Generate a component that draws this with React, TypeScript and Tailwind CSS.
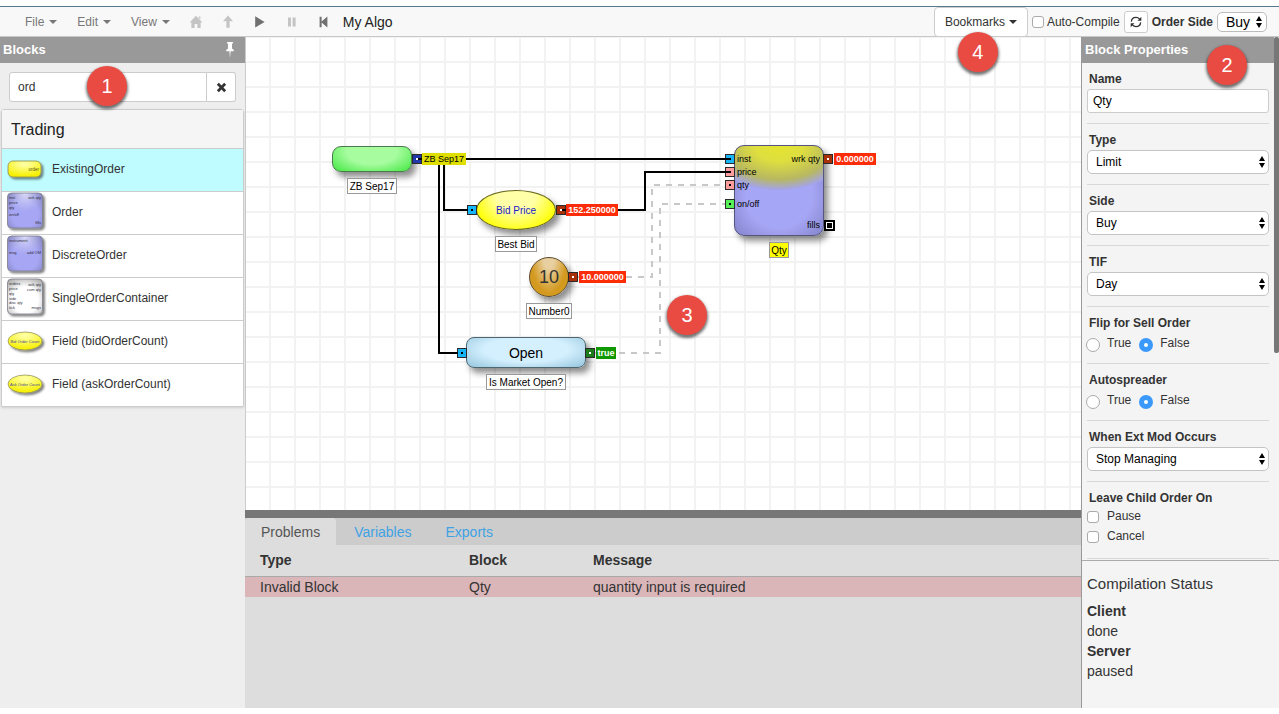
import React, { useState } from "react";

type IconProps = { className?: string };

const Caret = () => (
  <span className="border-x-4 border-t-4 border-x-transparent border-t-current" aria-hidden="true" />
);

const HomeIcon = ({ className }: IconProps) => (
  <svg viewBox="0 0 14 14" className={className} fill="currentColor" aria-hidden="true">
    <path d="M7 .8 13.4 7.4H11.6V13H8.4V9H5.6V13H2.4V7.4H.6Z" />
    <path d="M9.8 1.6h1.6v3L9.8 3z" />
  </svg>
);
const UpIcon = ({ className }: IconProps) => (
  <svg viewBox="0 0 14 14" className={className} fill="currentColor" aria-hidden="true">
    <path d="M7 .6 12 6.2H8.6V12.8H5.4V6.2H2Z" />
  </svg>
);
const PlayIcon = ({ className }: IconProps) => (
  <svg viewBox="0 0 14 14" className={className} fill="currentColor" aria-hidden="true">
    <path d="M2.2 1.2 11.600 7l-9.4 5.4z" />
  </svg>
);
const PauseIcon = ({ className }: IconProps) => (
  <svg viewBox="0 0 14 14" className={className} fill="currentColor" aria-hidden="true">
    <path d="M3 2.400h3v9H3zM7.600 2.400h3v9h-3z" />
  </svg>
);
const StepBackIcon = ({ className }: IconProps) => (
  <svg viewBox="0 0 14 14" className={className} fill="currentColor" aria-hidden="true">
    <path d="M2.6 1.800h2v4.600L10.400 1.600v10.800L4.600 7.600V12.200h-2z" />
  </svg>
);
const PinIcon = ({ className }: IconProps) => (
  <svg viewBox="0 0 10 18" className={className} fill="currentColor" aria-hidden="true">
    <path d="M2 1h6v1.500H7v5L8.800 9v1.200H5.600L5 17l-.6-6.800H1.200V9L3 7.500v-5H2z" />
  </svg>
);
const RemoveIcon = ({ className }: IconProps) => (
  <svg viewBox="0 0 12 12" className={className} stroke="currentColor" strokeWidth="3" aria-hidden="true">
    <path d="M2 2l8 8M10 2l-8 8" />
  </svg>
);
const RefreshIcon = ({ className }: IconProps) => (
  <svg viewBox="0 0 14 14" className={className} fill="none" stroke="currentColor" strokeWidth="1.5" aria-hidden="true">
    <path d="M1.6 6.600C1.800 3.600 4 1.700 7 1.700c1.700 0 3.200.8 4.200 2M12.400 7.400C12.200 10.400 10 12.300 7 12.300c-1.700 0-3.200-.8-4.200-2" />
    <path d="M13.200 1v4.400H8.800zM.8 13V8.600h4.400z" fill="currentColor" stroke="none" />
  </svg>
);
const UpDown = ({ className }: IconProps) => (
  <svg viewBox="0 0 8 12" className={className} fill="#000" aria-hidden="true">
    <path d="M4 0 7 5H1zM4 12 1 7h6z" />
  </svg>
);

const Badge = ({ n, className }: { n: number; className: string }) => (
  <span
    className={`absolute z-20 flex size-10 items-center justify-center rounded-full bg-[#e94b43] text-xl text-white shadow-[0_2px_3px_1px_rgba(0,0,0,0.55)] ${className}`}
  >
    {n}
  </span>
);

const iconButtons = [
  { label: "Home", Icon: HomeIcon, color: "text-[#c4c4c4]" },
  { label: "Up", Icon: UpIcon, color: "text-[#c4c4c4]" },
  { label: "Run", Icon: PlayIcon, color: "text-[#707070]" },
  { label: "Pause", Icon: PauseIcon, color: "text-[#c4c4c4]" },
  { label: "Restart", Icon: StepBackIcon, color: "text-[#707070]" },
];

function Toolbar() {
  return (
    <header className="flex h-[31px] shrink-0 items-center border-t border-b border-t-[#567a8c] border-b-[#c8c8c8] bg-[#f8f8f8] pr-3 pl-[25px] text-xs">
      <nav className="flex gap-5 text-[#777]">
        {["File", "Edit", "View"].map((m) => (
          <button key={m} type="button" className="flex items-center gap-[5px]">
            {m}
            <Caret />
          </button>
        ))}
      </nav>
      <div className="ml-[19px] flex gap-[18px]">
        {iconButtons.map(({ label, Icon, color }) => (
          <button key={label} type="button" aria-label={label} className={color}>
            <Icon className="size-3.5" />
          </button>
        ))}
      </div>
      <h1 className="ml-3 text-sm text-[#222]">My Algo</h1>
      <div className="ml-auto flex items-center gap-1 text-[#333]">
        <div className="relative">
          <button
            type="button"
            className="flex h-[30px] items-center gap-1 rounded-sm border border-[#ccc] bg-white px-[10px]"
          >
            Bookmarks
            <Caret />
          </button>
          <Badge n={4} className="top-[25px] left-6" />
        </div>
        <label className="flex items-center gap-[3px]">
          <input
            type="checkbox"
            className="size-3 appearance-none rounded-[3px] border border-[#aaa] bg-white checked:bg-[#3b99fc]"
          />
          Auto-Compile
        </label>
        <button
          type="button"
          aria-label="Compile"
          className="flex h-[22px] w-6 items-center justify-center rounded-[3px] border border-[#ccc] bg-white"
        >
          <RefreshIcon className="size-3" />
        </button>
        <label htmlFor="order-side" className="font-bold">
          Order Side
        </label>
        <div className="relative">
          <select
            id="order-side"
            className="block h-5 w-[50px] appearance-none rounded-[5px] border border-[#bbb] bg-white pl-2 text-sm leading-4 text-black"
          >
            <option>Buy</option>
            <option>Sell</option>
          </select>
          <UpDown className="pointer-events-none absolute top-1 right-1 h-3 w-2" />
        </div>
      </div>
    </header>
  );
}

type ThumbKind = "existing" | "order" | "discrete" | "container" | "bid" | "ask";

const thumbText: Record<"order" | "discrete" | "container", [number, number, "start" | "end", string][]> = {
  order: [
    [2, 7, "start", "inst"],
    [34, 7, "end", "wrk qty"],
    [2, 12, "start", "price"],
    [2, 17, "start", "qty"],
    [2, 24, "start", "on/off"],
    [34, 32, "end", "fills"],
  ],
  discrete: [
    [2, 7, "start", "instrument"],
    [2, 19, "start", "msg"],
    [34, 19, "end", "add OM"],
  ],
  container: [
    [2, 7, "start", "orders"],
    [34, 8, "end", "wrk qty"],
    [2, 12, "start", "price"],
    [34, 13, "end", "cum qty"],
    [2, 17, "start", "qty"],
    [2, 22, "start", "side"],
    [2, 26, "start", "disc qty"],
    [2, 31, "start", "tick"],
    [34, 31, "end", "msgs"],
  ],
};

function Thumb({ kind }: { kind: ThumbKind }) {
  const id = `thumb-${kind}`;
  const oval = kind === "bid" || kind === "ask";
  const yellow = oval || kind === "existing";
  const blue = kind === "order" || kind === "discrete";
  const inner = yellow ? "#ffff9e" : blue ? "#a6a6f4" : "#ffffff";
  const outer = yellow ? "#f6f000" : blue ? "#7e7eba" : "#a4a4a4";
  return (
    <svg viewBox="0 0 40 40" className="size-10 shrink-0" aria-hidden="true">
      <defs>
        <radialGradient id={id} cx="0.5" cy={yellow ? "0.2" : "0.6"} r="0.75">
          <stop offset={yellow ? "0.1" : "0.5"} stopColor={inner} />
          <stop offset="1" stopColor={outer} />
        </radialGradient>
        <radialGradient id={`${id}-g`} cx="0.5" cy="0" r="0.55">
          <stop offset="0" stopColor="#e4e4fa" stopOpacity="0.9" />
          <stop offset="1" stopColor="#c8c8f0" stopOpacity="0" />
        </radialGradient>
        <filter id={`${id}-s`} x="-20%" y="-20%" width="150%" height="150%">
          <feDropShadow dx="2" dy="2" stdDeviation="1.2" floodOpacity="0.5" />
        </filter>
      </defs>
      {oval ? (
        <g>
          <ellipse cx="18" cy="20" rx="17" ry="9" fill={`url(#${id})`} stroke="#8a8a50" strokeWidth="0.7" filter={`url(#${id}-s)`} />
          <text x="18" y="21.500" textAnchor="middle" fontSize="4" fill="#4a4a98">
            {kind === "bid" ? "Bid Order Count" : "Ask Order Count"}
          </text>
        </g>
      ) : kind === "existing" ? (
        <g>
          <rect x="1" y="12" width="33" height="16" rx="5" fill={`url(#${id})`} stroke="#8a8a50" strokeWidth="0.8" filter={`url(#${id}-s)`} />
          <text x="32" y="21.500" textAnchor="end" fontSize="4.500" fill="#55550a">
            order
          </text>
        </g>
      ) : (
        <g>
          <rect x="0.5" y="1" width="35" height="35" rx="4" fill={`url(#${id})`} stroke="#7c7c88" strokeWidth="0.8" filter={`url(#${id}-s)`} />
          {blue && <rect x="1" y="1.500" width="34" height="34" rx="4" fill={`url(#${id}-g)`} />}
          {thumbText[kind as "order" | "discrete" | "container"].map(([x, y, anchor, t]) => (
            <text key={t} x={x} y={y} textAnchor={anchor} fontSize="4" fill="#30303c">
              {t}
            </text>
          ))}
        </g>
      )}
    </svg>
  );
}

const blocks: { kind: ThumbKind; name: string }[] = [
  { kind: "existing", name: "ExistingOrder" },
  { kind: "order", name: "Order" },
  { kind: "discrete", name: "DiscreteOrder" },
  { kind: "container", name: "SingleOrderContainer" },
  { kind: "bid", name: "Field (bidOrderCount)" },
  { kind: "ask", name: "Field (askOrderCount)" },
];

function BlocksPanel() {
  const [query, setQuery] = useState("ord");
  const [selected, setSelected] = useState("ExistingOrder");
  return (
    <aside className="flex w-[246px] shrink-0 flex-col border-r border-[#ccc] bg-[#eee]">
      <div className="flex h-[26px] shrink-0 items-center justify-between bg-[#999] pr-[10px] pl-[3px] text-white">
        <h2 className="text-[13px] font-bold">Blocks</h2>
        <button type="button" aria-label="Pin panel">
          <PinIcon className="h-[18px] w-[10px]" />
        </button>
      </div>
      <div className="relative mx-[9px] mt-[9px] flex h-[30px]">
        <input
          type="text"
          aria-label="Search blocks"
          value={query}
          onChange={(e) => setQuery(e.target.value)}
          className="min-w-0 flex-1 rounded-l-[3px] border border-[#ccc] bg-white px-2 text-xs text-[#333]"
        />
        <button
          type="button"
          aria-label="Clear search"
          onClick={() => setQuery("")}
          className="flex w-[29px] items-center justify-center rounded-r-[3px] border border-l-0 border-[#ccc] bg-white text-[#333]"
        >
          <RemoveIcon className="size-[11px]" />
        </button>
        <Badge n={1} className="top-[-6px] left-[78px]" />
      </div>
      <section className="mx-px mt-[7px] rounded-t-[3px] border border-[#ccc] shadow-sm">
        <h3 className="flex h-[38px] items-center bg-[#f5f5f5] pt-px pl-[9px] text-base text-[#222]">Trading</h3>
        <ul>
          {blocks.map((b) => (
            <li key={b.name} className="border-t border-[#ccc]">
              <button
                type="button"
                onClick={() => setSelected(b.name)}
                className={`flex h-[42px] w-full items-center gap-[5px] pb-[2px] pl-[5px] text-left text-xs text-[#333] ${
                  selected === b.name ? "bg-[#bffcff]" : "bg-white"
                }`}
              >
                <Thumb kind={b.kind} />
                {b.name}
              </button>
            </li>
          ))}
        </ul>
      </section>
    </aside>
  );
}

const ports = [
  { pos: "left-[166px] top-[117px]", fill: "bg-[#2338a8]", dot: "bg-white" },
  { pos: "left-[221px] top-[168px]", fill: "bg-[#18b4f8]", dot: "bg-black" },
  { pos: "left-[310px] top-[168px]", fill: "bg-[#a83008]", dot: "bg-white" },
  { pos: "left-[322px] top-[235px]", fill: "bg-[#a83008]", dot: "bg-white" },
  { pos: "left-[211px] top-[311px]", fill: "bg-[#18b4f8]", dot: "bg-black" },
  { pos: "left-[339px] top-[311px]", fill: "bg-[#1c7c1c]", dot: "bg-white" },
  { pos: "left-[479px] top-[117px]", fill: "bg-[#18b4f8]", dot: "bg-black" },
  { pos: "left-[479px] top-[130px]", fill: "bg-[#ff9c9c]", dot: "bg-black" },
  { pos: "left-[479px] top-[143px]", fill: "bg-[#ff9c9c]", dot: "bg-black" },
  { pos: "left-[479px] top-[162px]", fill: "bg-[#58f058]", dot: "bg-black" },
  { pos: "left-[577px] top-[117px]", fill: "bg-[#a83008]", dot: "bg-white" },
];

const captions = [
  { text: "ZB Sep17", pos: "left-[101px] top-[141px] w-[50px]", look: "border-[#999] bg-white" },
  { text: "Best Bid", pos: "left-[249px] top-[199px] w-[42px]", look: "border-[#999] bg-white" },
  { text: "Number0", pos: "left-[280px] top-[266px] w-[46px]", look: "border-[#999] bg-white" },
  { text: "Is Market Open?", pos: "left-[240px] top-[337px] w-[80px]", look: "border-[#999] bg-white" },
  { text: "Qty", pos: "left-[523px] top-[205px] w-[20px]", look: "border-[#999] bg-[#ff0]" },
];

const values = [
  { text: "ZB Sep17", pos: "left-[176px] top-[116px] w-[44px]", look: "bg-[#dede00] text-black" },
  { text: "152.250000", pos: "left-[320px] top-[167px] w-[52px]", look: "bg-[#fc2c08] font-bold text-white" },
  { text: "10.000000", pos: "left-[333px] top-[234px] w-[47px]", look: "bg-[#fc2c08] font-bold text-white" },
  { text: "true", pos: "left-[350px] top-[310px] w-[20px]", look: "bg-[#109800] font-bold text-white" },
  { text: "0.000000", pos: "left-[588px] top-[116px] w-[42px]", look: "bg-[#fc2c08] font-bold text-white" },
];

const nodeShadow = "shadow-[4px_5px_6px_rgba(0,0,0,0.45)]";

function Canvas() {
  return (
    <main className="relative min-h-0 flex-1 overflow-hidden bg-white bg-[linear-gradient(to_right,transparent_23px,#f2f2f2_23px),linear-gradient(to_bottom,transparent_23px,#f2f2f2_23px)] bg-[size:25px_25px] bg-[position:0_1px]">
      <div className={`absolute top-[109px] left-[86px] h-[26px] w-[80px] rounded-[9px] border border-[#4b7a4b] bg-[radial-gradient(ellipse_at_50%_20%,#a8fca0_45%,#40e840_100%)] ${nodeShadow}`} />
      <div className={`absolute top-[153px] left-[230px] flex h-[40px] w-[80px] items-center justify-center rounded-[50%] border border-[#66661a] bg-[radial-gradient(ellipse_at_50%_10%,#ffffa8_35%,#ffff00_80%)] text-[10px] text-[#2020c8] ${nodeShadow}`}>
        Bid Price
      </div>
      <div className={`absolute top-[220px] left-[283px] flex size-10 items-center justify-center rounded-full border border-[#5a4a2a] bg-[radial-gradient(ellipse_at_50%_0%,#e8cfa0_20%,#d49a20_65%)] text-lg text-[#333] ${nodeShadow}`}>
        10
      </div>
      <div className={`absolute top-[300px] left-[220px] flex h-[31px] w-[120px] items-center justify-center rounded-[8px] border border-[#4d6670] bg-[radial-gradient(ellipse_at_50%_40%,#d4f0fe_50%,#94c4dc_100%)] text-sm text-black ${nodeShadow}`}>
        Open
      </div>
      <div className={`absolute top-[108px] left-[488px] h-[91px] w-[90px] rounded-[10px] border border-[#555580] bg-[radial-gradient(ellipse_80%_50%_at_50%_0%,#e4e430_0%,#dede40_35%,#b8b860_75%,#a4a4e8_98%,transparent_100%),radial-gradient(circle_at_50%_55%,#a6a6f6_50%,#7c7cc0_100%)] text-[9px] leading-[10px] text-black ${nodeShadow}`}>
        <span className="absolute top-2 left-[2px]">inst</span>
        <span className="absolute top-[21px] left-[2px]">price</span>
        <span className="absolute top-[34px] left-[2px]">qty</span>
        <span className="absolute top-[53px] left-[2px]">on/off</span>
        <span className="absolute top-2 right-[3px]">wrk qty</span>
        <span className="absolute right-[3px] bottom-[5px]">fills</span>
      </div>
      {ports.map((p) => (
        <span key={p.pos} className={`absolute flex size-[10px] items-center justify-center border border-[#2a2a2a] ${p.pos} ${p.fill}`}>
          <span className={`size-[2px] ${p.dot}`} />
        </span>
      ))}
      <span className="absolute top-[183px] left-[578px] flex size-[11px] items-center justify-center border-2 border-black bg-white">
        <span className="size-[5px] bg-black" />
      </span>
      <svg width="640" height="340" viewBox="0 0 640 340" className="absolute top-0 left-0" fill="none" strokeWidth="2" aria-hidden="true">
        <g stroke="#000">
          <path d="M172 122H484" />
          <path d="M198 122V173H222" />
          <path d="M193 122V316H212" />
          <path d="M316 173H399V135H484" />
        </g>
        <g stroke="#c8c8c8" strokeDasharray="6 6">
          <path d="M332 240H406V148H479" />
          <path d="M349 316H414V167H479" />
        </g>
      </svg>
      {values.map((v) => (
        <span key={v.text} className={`absolute h-3 text-center text-[9px] leading-3 whitespace-nowrap ${v.pos} ${v.look}`}>
          {v.text}
        </span>
      ))}
      {captions.map((c) => (
        <span key={c.text} className={`absolute flex h-4 items-center justify-center border pt-px text-[10px] leading-3 whitespace-nowrap text-black ${c.pos} ${c.look}`}>
          {c.text}
        </span>
      ))}
      <Badge n={3} className="top-[258px] left-[421px]" />
    </main>
  );
}

function ProblemsPanel() {
  const [tab, setTab] = useState("Problems");
  return (
    <section className="-ml-px h-[198px] shrink-0 border-t-8 border-[#777] bg-[#ddd] text-sm">
      <div role="tablist" className="flex h-[27px] gap-[2px] bg-[#ccc]">
        {["Problems", "Variables", "Exports"].map((t) => (
          <button
            key={t}
            type="button"
            role="tab"
            aria-selected={tab === t}
            onClick={() => setTab(t)}
            className={`rounded-t-[4px] px-4 ${tab === t ? "bg-[#ddd] text-[#555]" : "text-[#3fa2e4]"}`}
          >
            {t}
          </button>
        ))}
      </div>
      <table className="w-full table-fixed text-left text-[#333]">
        <colgroup>
          <col className="w-[224px]" />
          <col className="w-[124px]" />
          <col />
        </colgroup>
        <thead>
          <tr className="h-[31px] border-b border-[#aaa]">
            <th className="pl-[15px]">Type</th>
            <th>Block</th>
            <th>Message</th>
          </tr>
        </thead>
        <tbody>
          <tr className="h-5 bg-[#dab6b9]">
            <td className="pl-[15px]">Invalid Block</td>
            <td>Qty</td>
            <td>quantity input is required</td>
          </tr>
        </tbody>
      </table>
    </section>
  );
}

const sectionClass = "border-b border-[#d8d8d8] pt-2";
const titleClass = "block pl-[2px] text-xs leading-4 font-bold text-[#333]";

function SelectField({ id, label, options }: { id: string; label: string; options: string[] }) {
  return (
    <div className={`${sectionClass} pb-[10px]`}>
      <label htmlFor={id} className={titleClass}>
        {label}
      </label>
      <div className="relative mt-[2px]">
        <select id={id} className="block h-6 w-full appearance-none rounded-[5px] border border-[#c4c4c4] bg-white pl-2 text-xs text-black">
          {options.map((o) => (
            <option key={o}>{o}</option>
          ))}
        </select>
        <UpDown className="pointer-events-none absolute top-[6px] right-[3px] h-3 w-2" />
      </div>
    </div>
  );
}

function RadioField({ name, label }: { name: string; label: string }) {
  return (
    <fieldset className={`${sectionClass} pb-2`}>
      <legend className={`${titleClass} float-left w-full`}>{label}</legend>
      <div className="clear-both flex h-6 items-center gap-[9px] text-xs text-[#333]">
        {["True", "False"].map((v) => (
          <label key={v} className="-ml-px flex items-center gap-[7px]">
            <input
              type="radio"
              name={name}
              defaultChecked={v === "False"}
              className="mt-[3px] size-3.5 appearance-none rounded-full border border-[#aaa] bg-white checked:border-[5px] checked:border-[#3b99fc]"
            />
            {v}
          </label>
        ))}
      </div>
    </fieldset>
  );
}

function PropertiesPanel() {
  return (
    <aside className="flex w-[198px] shrink-0 flex-col border-l border-[#999] bg-[#f4f4f4]">
      <div className="relative min-h-0 flex-1 overflow-hidden pr-[5px]">
        <h2 className="flex h-[26px] items-center bg-[#999] pl-[3px] text-[13px] font-bold text-white">Block Properties</h2>
        <div className="px-[5px]">
          <div className={`${sectionClass} pb-[10px]`}>
            <label htmlFor="name" className={titleClass}>
              Name
            </label>
            <input id="name" type="text" defaultValue="Qty" className="mt-[2px] block h-6 w-full rounded-[3px] border border-[#ccc] bg-white px-[5px] text-xs text-black" />
          </div>
          <SelectField id="type" label="Type" options={["Limit", "Market"]} />
          <SelectField id="side" label="Side" options={["Buy", "Sell"]} />
          <SelectField id="tif" label="TIF" options={["Day", "GTC"]} />
          <RadioField name="flip" label="Flip for Sell Order" />
          <RadioField name="autospreader" label="Autospreader" />
          <SelectField id="ext-mod" label="When Ext Mod Occurs" options={["Stop Managing"]} />
          <fieldset className={`${sectionClass} pb-3`}>
            <legend className={`${titleClass} float-left w-full`}>Leave Child Order On</legend>
            <div className="clear-both">
              {["Pause", "Cancel"].map((v) => (
                <label key={v} className="flex h-5 items-center gap-2 text-xs text-[#333]">
                  <input type="checkbox" className="mt-[2px] size-3 appearance-none rounded-[3px] border border-[#aaa] bg-white checked:bg-[#3b99fc]" />
                  {v}
                </label>
              ))}
            </div>
          </fieldset>
        </div>
        <span className="absolute top-0 right-0 h-[316px] w-[5px] rounded-[2px] bg-[#777]" />
        <Badge n={2} className="top-2 right-8" />
      </div>
      <section className="h-[148px] shrink-0 border-t border-[#aaa] pt-[13px] pl-[5px] text-sm leading-5 text-[#333]">
        <h3 className="mb-[7px] text-[15px] leading-5">Compilation Status</h3>
        <dl>
          <dt className="font-bold">Client</dt>
          <dd>done</dd>
          <dt className="font-bold">Server</dt>
          <dd>paused</dd>
        </dl>
      </section>
    </aside>
  );
}

export default function App() {
  return (
    <div className="flex h-screen flex-col bg-white py-[6px] font-['Liberation_Sans',Arial,sans-serif]">
      <Toolbar />
      <div className="flex min-h-0 flex-1">
        <BlocksPanel />
        <div className="flex min-w-0 flex-1 flex-col">
          <Canvas />
          <ProblemsPanel />
        </div>
        <PropertiesPanel />
      </div>
    </div>
  );
}
